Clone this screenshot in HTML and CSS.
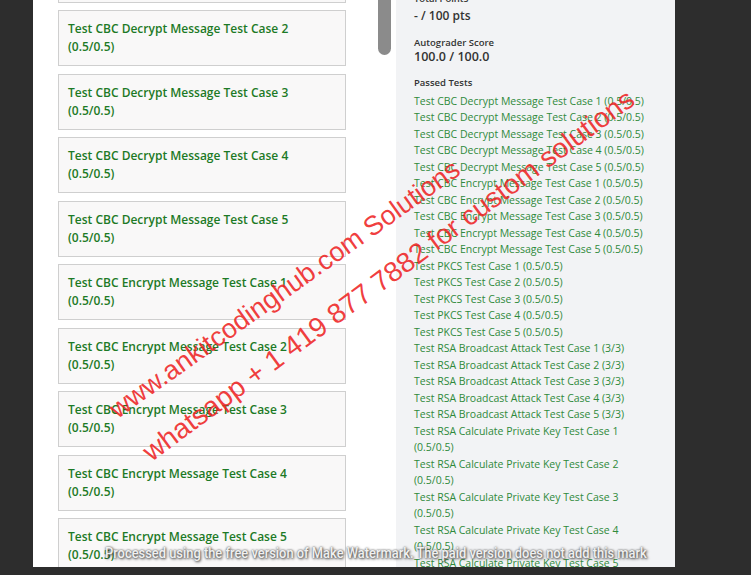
FILE: index.html
```html
<!DOCTYPE html>
<html lang="en">
<head>
    <meta charset="UTF-8">
    <meta name="viewport" content="width=device-width, initial-scale=1.0">
    <title>Autograder Results</title>
    <link rel="stylesheet" href="styles.css">
</head>
<body>
    <div class="page">
        <div class="results">
            <div class="test-list">
                <div class="test-card">Test CBC Decrypt Message Test Case 1 (0.5/0.5)</div>
                <div class="test-card">Test CBC Decrypt Message Test Case 2 (0.5/0.5)</div>
                <div class="test-card">Test CBC Decrypt Message Test Case 3 (0.5/0.5)</div>
                <div class="test-card">Test CBC Decrypt Message Test Case 4 (0.5/0.5)</div>
                <div class="test-card">Test CBC Decrypt Message Test Case 5 (0.5/0.5)</div>
                <div class="test-card">Test CBC Encrypt Message Test Case 1 (0.5/0.5)</div>
                <div class="test-card">Test CBC Encrypt Message Test Case 2 (0.5/0.5)</div>
                <div class="test-card">Test CBC Encrypt Message Test Case 3 (0.5/0.5)</div>
                <div class="test-card">Test CBC Encrypt Message Test Case 4 (0.5/0.5)</div>
                <div class="test-card">Test CBC Encrypt Message Test Case 5 (0.5/0.5)</div>
            </div>
        </div>

        <div class="scroll-track">
            <div class="scroll-thumb"></div>
        </div>

        <div class="sidebar">
            <div class="label label-first">Total Points</div>
            <div class="value">- / 100 pts</div>

            <div class="label label-gap">Autograder Score</div>
            <div class="value value-tight">100.0 / 100.0</div>

            <div class="label label-gap-sm">Passed Tests</div>
            <ul class="passed">
                <li>Test CBC Decrypt Message Test Case 1 (0.5/0.5)</li>
                <li>Test CBC Decrypt Message Test Case 2 (0.5/0.5)</li>
                <li>Test CBC Decrypt Message Test Case 3 (0.5/0.5)</li>
                <li>Test CBC Decrypt Message Test Case 4 (0.5/0.5)</li>
                <li>Test CBC Decrypt Message Test Case 5 (0.5/0.5)</li>
                <li>Test CBC Encrypt Message Test Case 1 (0.5/0.5)</li>
                <li>Test CBC Encrypt Message Test Case 2 (0.5/0.5)</li>
                <li>Test CBC Encrypt Message Test Case 3 (0.5/0.5)</li>
                <li>Test CBC Encrypt Message Test Case 4 (0.5/0.5)</li>
                <li>Test CBC Encrypt Message Test Case 5 (0.5/0.5)</li>
                <li>Test PKCS Test Case 1 (0.5/0.5)</li>
                <li>Test PKCS Test Case 2 (0.5/0.5)</li>
                <li>Test PKCS Test Case 3 (0.5/0.5)</li>
                <li>Test PKCS Test Case 4 (0.5/0.5)</li>
                <li>Test PKCS Test Case 5 (0.5/0.5)</li>
                <li>Test RSA Broadcast Attack Test Case 1 (3/3)</li>
                <li>Test RSA Broadcast Attack Test Case 2 (3/3)</li>
                <li>Test RSA Broadcast Attack Test Case 3 (3/3)</li>
                <li>Test RSA Broadcast Attack Test Case 4 (3/3)</li>
                <li>Test RSA Broadcast Attack Test Case 5 (3/3)</li>
                <li>Test RSA Calculate Private Key Test Case 1 (0.5/0.5)</li>
                <li>Test RSA Calculate Private Key Test Case 2 (0.5/0.5)</li>
                <li>Test RSA Calculate Private Key Test Case 3 (0.5/0.5)</li>
                <li>Test RSA Calculate Private Key Test Case 4 (0.5/0.5)</li>
                <li>Test RSA Calculate Private Key Test Case 5 (0.5/0.5)</li>
            </ul>
        </div>

        <!-- watermark overlay -->
        <div class="stamp stamp-site">www.ankitcodinghub.com Solutions</div>
        <div class="stamp stamp-phone">whatsapp + 1 419 877 7882 for custom solutions</div>
        <div class="footer-mark">Processed using the free version of Make Watermark. The paid version does not add this mark</div>
    </div>
</body>
</html>
```

FILE: styles.css
```css
* {
    margin: 0;
    padding: 0;
    box-sizing: border-box;
}

body {
    background: #2d2d2d;
    height: 575px;
    overflow: hidden;
    font-family: 'Open Sans', 'Noto Sans', sans-serif;
}

.page {
    position: relative;
    margin-left: 33px;
    width: 642px;
    height: 567px;
    background: #ffffff;
    display: flex;
    overflow: hidden;
}

/* left column: one card per test */
.results {
    width: 345px;
    padding-left: 25px;
}

.test-list {
    display: flex;
    flex-direction: column;
    gap: 7.5px;
    margin-top: -53.5px;
}

.test-card {
    width: 288px;
    padding: 9px 20px 9px 9px;
    background: #f9f8f8;
    border: 1px solid #cfcfcf;
    color: #1d7a26;
    font-size: 12px;
    font-weight: 600;
    line-height: 18px;
}

.scroll-track {
    width: 18px;
}

.scroll-thumb {
    width: 13px;
    height: 65px;
    margin-top: -10px;
    background: #8b8b8b;
    border-radius: 7px;
}

/* right column: score summary */
.sidebar {
    width: 279px;
    background: #f2f3f5;
    padding: 0 24px 0 18px;
    color: #333333;
}

.label {
    font-size: 9.5px;
    font-weight: 600;
    line-height: 14px;
}

.label-first {
    margin-top: -8px;
}

.label-gap {
    margin-top: 13px;
}

.label-gap-sm {
    margin-top: 12px;
}

.value {
    font-size: 12px;
    font-weight: 600;
    line-height: 14px;
    margin-top: 3px;
}

.value-tight {
    margin-top: 0;
    font-size: 12.5px;
}

.passed {
    list-style: none;
    margin-top: 2.5px;
    color: #2f8a3b;
    font-size: 10.5px;
    line-height: 16.5px;
}

/* diagonal stamp and footer note; each stamp turns about its baseline start */
.stamp {
    position: absolute;
    font-family: 'Liberation Sans', Arial, sans-serif;
    font-size: 27px;
    line-height: 1;
    white-space: nowrap;
    color: rgba(238, 36, 36, 0.88);
    transform-origin: 0 85%;
    transform: rotate(-35.5deg);
}

.stamp-site {
    left: 85px;
    top: 397px;
}

.stamp-phone {
    left: 119px;
    top: 439px;
    font-size: 28px;
    transform: rotate(-36.5deg);
}

.footer-mark {
    position: absolute;
    left: 72px;
    top: 545px;
    font-family: Roboto, sans-serif;
    font-size: 14px;
    font-weight: 500;
    white-space: nowrap;
    color: #f0f0f0;
    text-shadow: 0 0 2px #555, 1px 1px 3px #333;
    transform-origin: 0 50%;
    transform: scaleX(0.92);
}
```
